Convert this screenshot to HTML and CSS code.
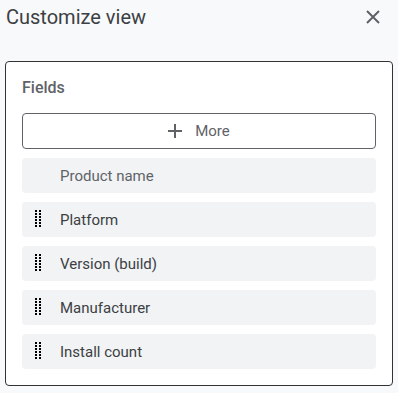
FILE: index.html
```html
<!DOCTYPE html>
<html lang="en">
<head>
    <meta charset="UTF-8">
    <meta name="viewport" content="width=device-width, initial-scale=1.0">
    <title>Customize view</title>
    <link rel="stylesheet" href="styles.css">
</head>
<body>
    <div class="header">
        <h1>Customize view</h1>
        <button class="close" type="button" aria-label="Close">
            <svg width="14" height="14" viewBox="0 0 14 14"><path d="M1 1L13 13M13 1L1 13" stroke="#5f6368" stroke-width="2"/></svg>
        </button>
    </div>

    <div class="panel">
        <div class="title">Fields</div>
        <button class="more" type="button">
            <svg width="14" height="14" viewBox="0 0 14 14"><path d="M7 0V14M0 7H14" stroke="#5f6368" stroke-width="2"/></svg>
            <span>More</span>
        </button>

        <ul class="fields">
            <li class="field fixed"><span class="name">Product name</span></li>
            <li class="field"><svg class="handle" width="6" height="17"><use href="#dots"/></svg><span class="name">Platform</span></li>
            <li class="field"><svg class="handle" width="6" height="17"><use href="#dots"/></svg><span class="name">Version (build)</span></li>
            <li class="field"><svg class="handle" width="6" height="17"><use href="#dots"/></svg><span class="name">Manufacturer</span></li>
            <li class="field"><svg class="handle" width="6" height="17"><use href="#dots"/></svg><span class="name">Install count</span></li>
        </ul>
    </div>

    <svg width="0" height="0" style="position:absolute">
        <defs>
            <g id="dots" fill="#000">
                <rect x="0" y="0" width="2" height="2"/><rect x="4" y="0" width="2" height="2"/>
                <rect x="0" y="3" width="2" height="2"/><rect x="4" y="3" width="2" height="2"/>
                <rect x="0" y="6" width="2" height="2"/><rect x="4" y="6" width="2" height="2"/>
                <rect x="0" y="9" width="2" height="2"/><rect x="4" y="9" width="2" height="2"/>
                <rect x="0" y="12" width="2" height="2"/><rect x="4" y="12" width="2" height="2"/>
                <rect x="0" y="15" width="2" height="2"/><rect x="4" y="15" width="2" height="2"/>
            </g>
        </defs>
    </svg>
</body>
</html>
```

FILE: styles.css
```css
body {
    margin: 0;
    background: #f8f9fa;
    font-family: Roboto, "Liberation Sans", sans-serif;
    color: #3c4043;
}

.header {
    display: flex;
    justify-content: space-between;
    align-items: flex-start;
    padding: 5px 18px 0 6px;
    height: 61px;
    box-sizing: border-box;
}

h1 {
    margin: 0;
    font-size: 20px;
    font-weight: 400;
    line-height: 24px;
    color: #3c4043;
}

.close {
    border: none;
    background: none;
    padding: 0;
    margin-top: 5px;
    width: 14px;
    height: 14px;
    display: flex;
}

.panel {
    margin: 0 5px;
    background: #fff;
    border: 1px solid #333;
    border-radius: 4px;
    padding: 14px 16px 16px;
}

.title {
    font-size: 16px;
    font-weight: 500;
    line-height: 24px;
    color: #5f6368;
    margin-bottom: 13px;
}

.more {
    width: 100%;
    height: 36px;
    display: flex;
    justify-content: center;
    align-items: center;
    gap: 13px;
    background: #fff;
    border: 1px solid #5f6368;
    border-radius: 4px;
    font-family: inherit;
    font-size: 15px;
    color: #5f6368;
    padding: 0;
}

.fields {
    list-style: none;
    margin: 9px 0 0;
    padding: 0;
    display: flex;
    flex-direction: column;
    gap: 9px;
}

.field {
    height: 35px;
    background: #f1f3f4;
    border-radius: 4px;
    display: flex;
    align-items: center;
    padding-left: 13px;
    font-size: 15px;
}

.field.fixed {
    padding-left: 38px;
    color: #5f6368;
}

.handle {
    flex: none;
    margin: -3px 19px 0 0;
}
```
